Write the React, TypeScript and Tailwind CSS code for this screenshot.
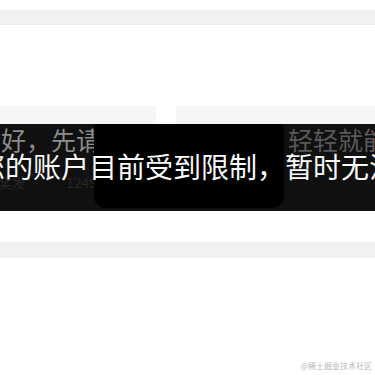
import React from "react";

export default function App() {
  const font = { fontFamily: '"Noto Sans CJK SC", "Noto Sans", sans-serif' };
  return (
    <div
      className="relative w-[375px] h-[375px] overflow-hidden bg-white"
      style={font}
    >
      <div className="pt-[10px]">
        <div className="h-[15px] bg-[#f0f1f3] border-b border-[#e9eaec]" />
      </div>
      <div className="mt-[81px] flex gap-[20px]">
        <div className="w-[156px] h-[18px] bg-[#f5f6f8]" />
        <div className="flex-1 h-[18px] bg-[#f5f6f8]" />
      </div>
      <div className="relative h-[87px] bg-[#101010] overflow-hidden">
        {/* ghost content under the overlay */}
        <div className="absolute inset-x-0 top-[1px] flex justify-between whitespace-nowrap text-[25px] leading-[28px]">
          <span className="ml-[-24px] text-[#8c8c8c]">你好，先请</span>
          <span className="mr-[-13px] text-[#595959]">轻轻就能</span>
        </div>
        <div className="absolute left-[-2px] top-[50px] flex gap-[40px] whitespace-nowrap text-[14px] leading-[16px] text-[#262626]">
          <span>奖发</span>
          <span>1249</span>
        </div>
        {/* toast card */}
        <div className="absolute left-[94px] top-[-6px] w-[190px] h-[90px] rounded-[12px] bg-black" />
        {/* message */}
        <div className="absolute left-[-23px] top-[28px] whitespace-nowrap text-[28px] leading-[28px] text-[#fafafa]">
          您的账户目前受到限制，暂时无法使用
        </div>
      </div>
      <div className="mt-[31px] h-[16px] bg-[#f0f1f3]" />
      <div className="absolute right-[3px] bottom-[4px] text-[8px] leading-[10px] text-[#b8b8b8] whitespace-nowrap">
        @稀土掘金技术社区
      </div>
    </div>
  );
}
